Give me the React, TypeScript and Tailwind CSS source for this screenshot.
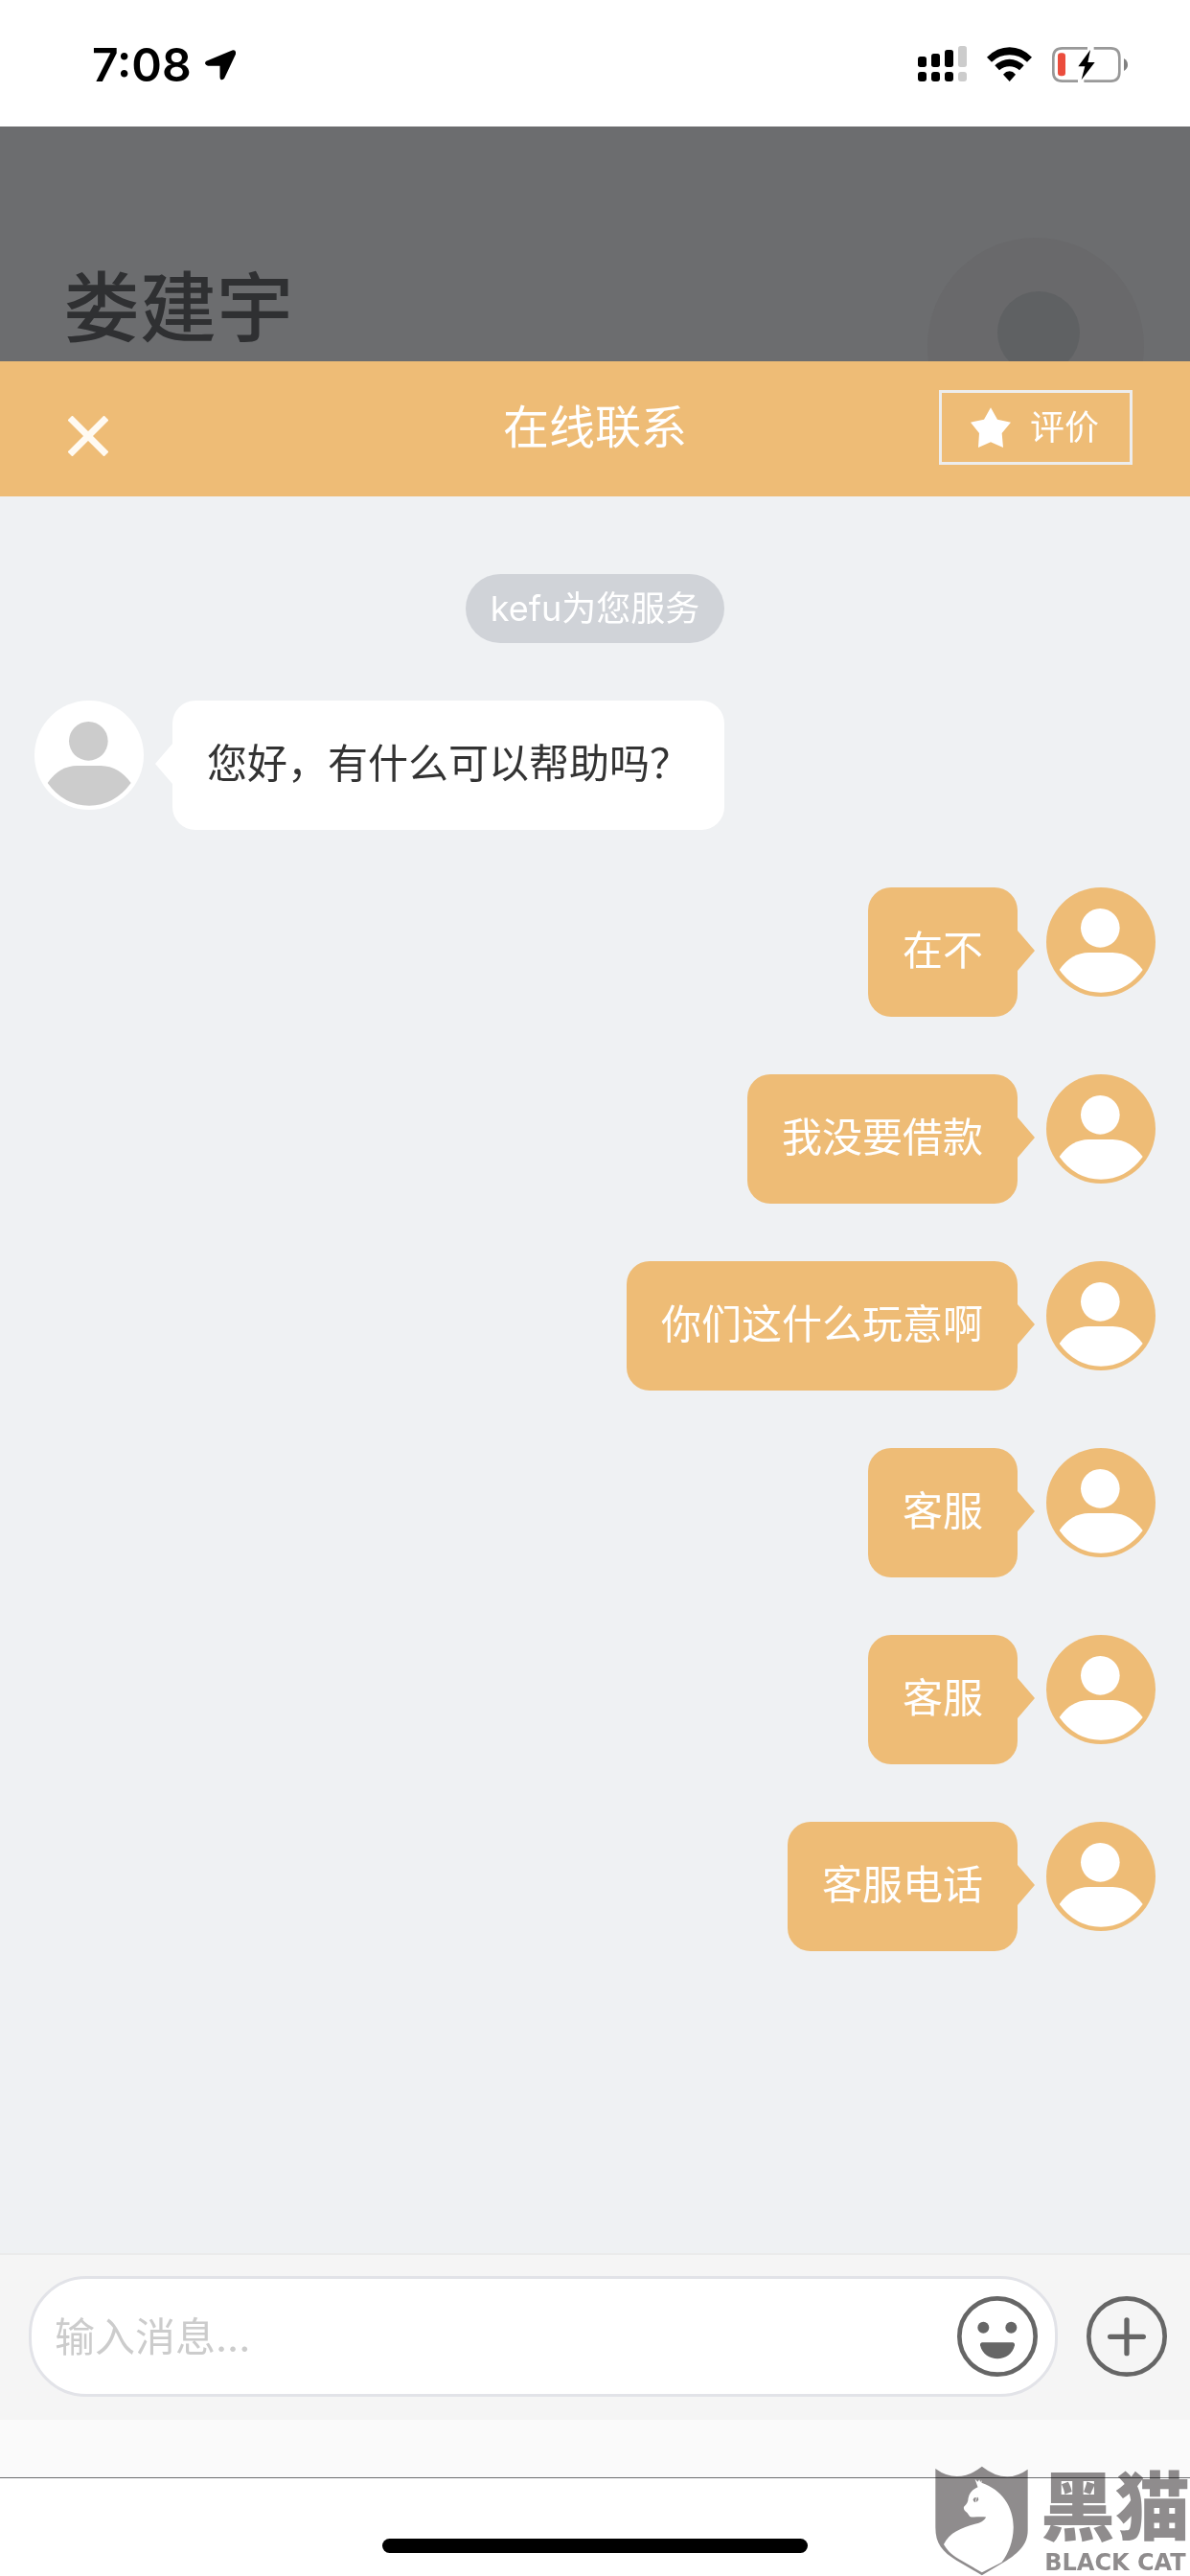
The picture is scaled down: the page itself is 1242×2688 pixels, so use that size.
import { useState } from "react";

const messages = [
  { id: 1, mine: false, text: "您好，有什么可以帮助吗？" },
  { id: 2, mine: true, text: "在不" },
  { id: 3, mine: true, text: "我没要借款" },
  { id: 4, mine: true, text: "你们这什么玩意啊" },
  { id: 5, mine: true, text: "客服" },
  { id: 6, mine: true, text: "客服" },
  { id: 7, mine: true, text: "客服电话" },
];

const StatusBar = () => (
  <div className="flex h-[132px] items-center justify-between bg-white pr-[65px] pl-24">
    <div className="flex items-center gap-[14px] pt-[3px]">
      <span className="text-5xl font-semibold text-black">7:08</span>
      <svg viewBox="638 155 97 96" className="h-8 w-8" aria-hidden="true">
        <path
          d="M642 190 L724 156 Q737 153 735 168 L699 245 Q695 251 689 249 Q685 247 685 240 V205 H647 Q640 204 638 198 Q638 192 642 190Z"
          fill="#000"
        />
      </svg>
    </div>
    <div className="flex items-center gap-[21px]">
      {/* Dual SIM signal */}
      <svg viewBox="174 138 153 120" className="h-10 w-[51px]" aria-hidden="true">
        <rect x="174" y="177" width="27" height="33" rx="8" />
        <rect x="216" y="168" width="27" height="42" rx="8" />
        <rect x="258" y="156" width="27" height="54" rx="8" />
        <rect x="300" y="144" width="27" height="66" rx="8" fill="#ccc" />
        <rect x="174" y="225" width="27" height="30" rx="9" />
        <rect x="216" y="225" width="27" height="30" rx="9" />
        <rect x="258" y="225" width="27" height="30" rx="9" />
        <rect x="300" y="225" width="27" height="30" rx="9" fill="#ccc" />
      </svg>
      {/* Wifi */}
      <svg viewBox="390 138 141 120" className="h-10 w-[47px]" aria-hidden="true">
        <path d="M390 179 Q422 148 461 148 Q499 148 531 179 L516 194 Q492 172 461 172 Q429 172 405 194Z" />
        <path d="M415 205 Q436 185 461 185 Q485 185 506 205 L492 220 Q478 208 461 208 Q443 208 429 220Z" />
        <path d="M441 233 Q450 223 461 223 Q471 223 480 233 L461 255Z" />
      </svg>
      {/* Battery */}
      <svg viewBox="594 138 237 120" className="h-10 w-[79px]" aria-hidden="true">
        <path
          d="M705 151 H626 Q598 151 598 179 V226 Q598 254 626 254 H675 M694 254 H778 Q805 254 805 226 V179 Q805 151 778 151 H725"
          fill="none"
          stroke="#999"
          strokeWidth="8"
        />
        <path d="M819 183 Q831 190 831 203 Q831 215 819 222Z" fill="#808080" />
        <rect x="612" y="166" width="24" height="72" rx="10" fill="#eb4d3d" />
        <path d="M714 156 L676 208 H697 L686 250 L728 195 H706Z" fill="#000" />
      </svg>
    </div>
  </div>
);

const ProfileBackdrop = () => (
  <div className="flex h-[245px] items-start justify-between overflow-hidden bg-[#6c6d6f] pr-12 pl-[66px]">
    <h1 className="pt-[131px] text-[80px] leading-[116px] font-medium text-[#2f3032]">娄建宇</h1>
    <svg viewBox="0 0 226 226" className="mt-[116px] size-[226px]" aria-hidden="true">
      <circle cx="113" cy="113" r="113" fill="#69696b" />
      <circle cx="116" cy="99" r="43" fill="#5f6163" />
    </svg>
  </div>
);

const ChatHeader = () => (
  <header className="grid h-[141px] grid-cols-[1fr_auto_1fr] items-center bg-[#eebc76] px-[60px] pb-[3px] text-white">
    <button type="button" aria-label="关闭" className="mt-[18px] justify-self-start px-[11px]">
      <svg viewBox="0 0 42 42" className="size-[42px]">
        <path d="M2 2 L40 40 M40 2 L2 40" stroke="#fffaf2" strokeWidth="7" fill="none" />
      </svg>
    </button>
    <h2 className="text-5xl">在线联系</h2>
    <button
      type="button"
      className="flex h-[78px] items-center gap-5 justify-self-end border-3 border-[#ededed] pr-8 pl-[30px] text-4xl"
    >
      <svg viewBox="342 615 126 126" className="size-[42px]" aria-hidden="true">
        <path
          d="M405 616 L426 653 L468 662 L440 696 L444 741 L405 724 L366 741 L369 696 L342 662 L384 653Z"
          fill="#fff"
        />
      </svg>
      评价
    </button>
  </header>
);

const Avatar = ({ mine }: { mine: boolean }) => (
  <svg viewBox="0 0 342 342" className="size-[114px] shrink-0" aria-hidden="true">
    <circle cx="171" cy="171" r="171" fill={mine ? "#eebc76" : "#fff"} />
    <g fill={mine ? "#fff" : "#ccc"}>
      <circle cx="169" cy="127" r="61" />
      <path d="M41 258 Q78 204 134 204 H208 Q265 206 302 258 Q250 329 171 329 Q92 329 41 258Z" />
    </g>
  </svg>
);

const MessageRow = ({ mine, text }: { mine: boolean; text: string }) => (
  <li className={`flex items-start ${mine ? "flex-row-reverse" : ""}`}>
    <Avatar mine={mine} />
    <svg
      viewBox="0 0 18 42"
      className={`mt-[45px] h-[42px] w-[18px] shrink-0 ${mine ? "mr-3 -scale-x-100" : "ml-3"}`}
      aria-hidden="true"
    >
      <path d="M18 0 L0 21 L18 42Z" fill={mine ? "#eebc76" : "#fff"} />
    </svg>
    <p
      className={`rounded-3xl px-9 pt-[34px] pb-[38px] text-[42px] leading-[63px] ${
        mine ? "bg-[#eebc76] text-white" : "bg-white text-[#333]"
      }`}
    >
      {text}
    </p>
  </li>
);

const Composer = () => {
  const [value, setValue] = useState("");

  return (
    <form
      className="flex items-center gap-[30px] border-t-2 border-[#ebebeb] bg-[#f5f5f5] pt-[22px] pr-6 pb-6 pl-[30px]"
      onSubmit={(e) => e.preventDefault()}
    >
      <div className="flex h-[126px] min-w-0 flex-1 items-center rounded-[60px] border-3 border-[#e2e3e8] bg-white pr-[18px] pl-6">
        <input
          type="text"
          aria-label="输入消息"
          placeholder="输入消息..."
          value={value}
          onChange={(e) => setValue(e.target.value)}
          className="min-w-0 flex-1 bg-transparent text-[42px] text-[#333] outline-none placeholder:text-[#ccc]"
        />
        <button type="button" aria-label="表情">
          <svg viewBox="0 0 252 252" className="size-[84px]">
            <circle cx="126" cy="126" r="119" fill="none" stroke="#666" strokeWidth="14" />
            <circle cx="82" cy="98" r="18" fill="#666" />
            <circle cx="169" cy="98" r="18" fill="#666" />
            <path
              d="M79 145 H173 Q181 146 180 154 C174 182 150 196 126 196 C102 196 78 182 72 154 Q71 146 79 145Z"
              fill="#666"
            />
          </svg>
        </button>
      </div>
      <button type="button" aria-label="更多">
        <svg viewBox="0 0 252 252" className="size-[84px]">
          <circle cx="126" cy="126" r="119" fill="none" stroke="#666" strokeWidth="14" />
          <path
            d="M74 127 H178 M126 75 V179"
            fill="none"
            stroke="#666"
            strokeWidth="16"
            strokeLinecap="round"
          />
        </svg>
      </button>
    </form>
  );
};

const Watermark = () => (
  <div className="absolute right-0 bottom-0 flex items-end gap-3 text-[#8f8c8d] mix-blend-multiply">
    <svg viewBox="90 97 298 346" className="h-[115px] w-[99px]" aria-hidden="true">
      <path
        d="M94 106 Q165 158 240 99 Q315 158 384 108 V300 C384 345 352 372 318 394 L240 441 L160 394 C116 366 94 342 94 290Z"
        fill="#8f8c8d"
      />
      <path
        d="M218 138 L227 147 L232 140 L235 148 L239 143 V150 C304 172 340 228 339 292 C338 334 324 372 302 400 L240 432 L166 389 C143 376 130 361 120 344 C138 306 176 292 218 280 C236 276 246 270 253 258 C238 257 222 258 207 258 C200 257 198 248 191 242 C184 237 181 231 184 225 C192 217 197 210 197 199 C200 184 209 172 227 164Z"
        fill="#fff"
      />
      <path d="M212 204 Q214 196 222 196 L219 212 Q214 210 212 204Z" fill="#8f8c8d" />
      <path d="M225 195 Q230 197 229 203 Q227 210 221 211Z" fill="#8f8c8d" />
    </svg>
    <div className="flex flex-col items-center pb-px">
      <span className="text-[78px] leading-[88px] font-black">黑猫</span>
      <span className="font-['DejaVu_Sans',sans-serif] text-2xl leading-[26px] font-bold">
        BLACK CAT
      </span>
    </div>
  </div>
);

export default function App() {
  return (
    <div
      lang="zh-CN"
      className="relative flex min-h-screen flex-col bg-white font-['Inter','Noto_Sans_CJK_SC',sans-serif]"
    >
      <StatusBar />
      <ProfileBackdrop />
      <ChatHeader />
      <main className="flex flex-1 flex-col bg-[#eff1f3] px-9 pt-[81px]">
        <p className="mb-[60px] self-center rounded-full bg-[#d0d3d8] px-[26px] text-4xl leading-[72px] text-white">
          kefu为您服务
        </p>
        <ul className="flex flex-col gap-[60px]">
          {messages.map((m) => (
            <MessageRow key={m.id} mine={m.mine} text={m.text} />
          ))}
        </ul>
      </main>
      <Composer />
      <div className="h-[61px] border-b border-[#6c6d6f] bg-[#fafafa]" />
      <footer className="flex h-[102px] items-end justify-center bg-white pb-6">
        <div className="h-[15px] w-[444px] rounded-full bg-black" />
      </footer>
      <Watermark />
    </div>
  );
}
